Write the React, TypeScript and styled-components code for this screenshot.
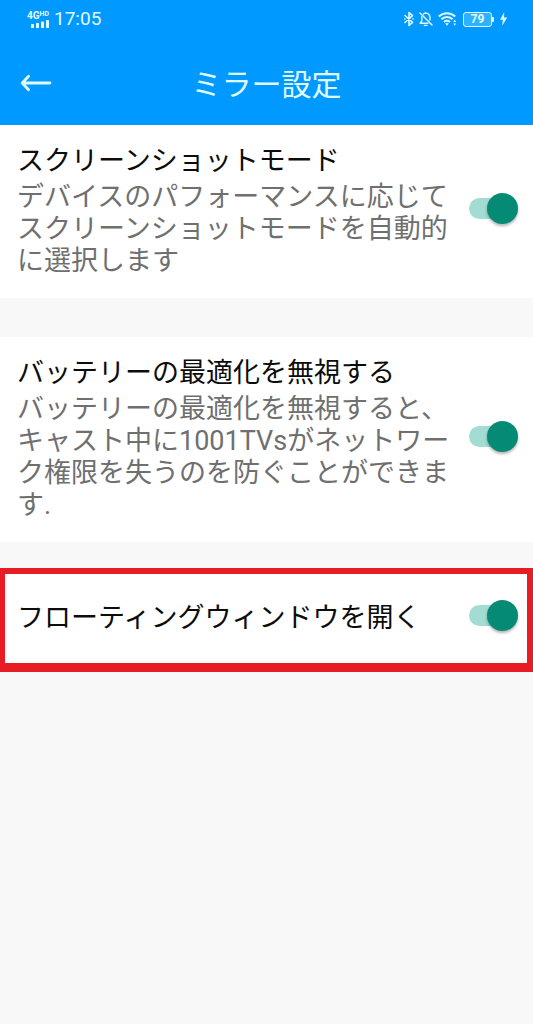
import React, { useId, useState } from "react";
import styled, { createGlobalStyle } from "styled-components";

const GlobalStyle = createGlobalStyle`
  * { box-sizing: border-box; }
  html, body { margin: 0; background: #f8f8f8; }
  body { font-family: Roboto, "Noto Sans CJK JP", sans-serif; }
`;

const Screen = styled.div`
  display: flex;
  flex-direction: column;
  min-height: 100vh;
  background: #f8f8f8;
`;

const Header = styled.header`
  background: #0099ff;
  color: #e0fbff;
`;

const StatusBar = styled.div`
  display: flex;
  align-items: center;
  justify-content: space-between;
  height: 38px;
  padding: 0 25px;
`;

const StatusGroup = styled.div`
  display: flex;
  align-items: center;
`;

const Network = styled.div`
  display: flex;
  flex-direction: column;
  align-items: flex-end;
  width: 24px;
  margin-right: 5px;
`;

const NetworkLabel = styled.div`
  display: flex;
  align-items: flex-start;
  font-size: 10px;
  line-height: 9px;
  font-weight: 700;
`;

const NetworkTag = styled.span`
  font-size: 7px;
  line-height: 6px;
`;

const Clock = styled.time`
  font-size: 19px;
  line-height: 22px;
`;

const StatusIcons = styled(StatusGroup)`
  gap: 5px;
`;

const Battery = styled.div`
  display: flex;
  align-items: center;

  &::after {
    content: "";
    width: 2px;
    height: 5px;
    background: currentColor;
    border-radius: 0 1px 1px 0;
  }
`;

const BatteryLevel = styled.span`
  display: flex;
  align-items: center;
  justify-content: center;
  width: 29px;
  height: 15px;
  border: 1px solid currentColor;
  border-radius: 3px;
  background: #2eb2ff;
  font-size: 12px;
  line-height: 13px;
  font-weight: 700;
`;

const TitleBar = styled.div`
  display: grid;
  grid-template-columns: 56px 1fr 56px;
  align-items: center;
  height: 87px;
  padding-top: 6px;
`;

const BackButton = styled.button`
  display: flex;
  align-items: center;
  height: 48px;
  padding: 0 0 4px 20px;
  border: 0;
  background: none;
  color: inherit;
  cursor: pointer;
`;

const Title = styled.h1`
  margin: 0;
  font-size: 30px;
  line-height: 40px;
  font-weight: 400;
  text-align: center;
`;

const Settings = styled.main`
  display: flex;
  flex-direction: column;
`;

const SettingRow = styled.section<{ $spaceBelow?: number; $highlighted?: boolean }>`
  display: flex;
  align-items: center;
  gap: 16px;
  margin-bottom: ${(p) => p.$spaceBelow ?? 0}px;
  padding: ${(p) => (p.$highlighted ? "26px 9px 27px 12px" : "20px 15px 21px 17px")};
  background: #ffffff;
  border: 0 solid #e81c24;
  border-width: ${(p) => (p.$highlighted ? "6px 6px 9px 5px" : "0")};
`;

const SettingText = styled.div`
  flex: 1;
  min-width: 0;
`;

const SettingLabel = styled.label`
  display: block;
  color: #0c0c0c;
  font-size: 27px;
  line-height: 32px;
`;

const SettingNote = styled.p`
  margin: 4px 0 0;
  color: #6f6f6f;
  font-size: 27px;
  line-height: 32px;
`;

const Switch = styled.input`
  appearance: none;
  flex: none;
  display: flex;
  align-items: center;
  position: relative;
  width: 49px;
  height: 31px;
  margin: 0 0 5px;
  cursor: pointer;

  &::before {
    content: "";
    width: 44px;
    height: 21px;
    border-radius: 11px;
    background: #c4c4c4;
  }

  &::after {
    content: "";
    position: absolute;
    top: 0;
    left: 0;
    width: 31px;
    height: 31px;
    border-radius: 50%;
    background: #f1f1f1;
    box-shadow: 0 2px 3px rgba(0, 0, 0, 0.3);
  }

  &:checked::before {
    background: #a3dcd3;
  }

  &:checked::after {
    left: 18px;
    background: #058a76;
  }
`;

type SettingProps = {
  label: string;
  note?: string;
  spaceBelow?: number;
  highlighted?: boolean;
};

function Setting({ label, note, spaceBelow, highlighted }: SettingProps) {
  const id = useId();
  const [on, setOn] = useState(true);
  return (
    <SettingRow $spaceBelow={spaceBelow} $highlighted={highlighted}>
      <SettingText>
        <SettingLabel htmlFor={id}>{label}</SettingLabel>
        {note && <SettingNote id={`${id}-note`}>{note}</SettingNote>}
      </SettingText>
      <Switch
        id={id}
        type="checkbox"
        role="switch"
        aria-describedby={note ? `${id}-note` : undefined}
        checked={on}
        onChange={(e) => setOn(e.target.checked)}
      />
    </SettingRow>
  );
}

const SignalIcon = () => (
  <svg width="18" height="8" viewBox="0 0 18 8" fill="currentColor" aria-hidden="true">
    <rect x="0" y="4" width="3" height="4" rx="0.5" />
    <rect x="5" y="3" width="3" height="5" rx="0.5" />
    <rect x="10" y="1.5" width="3" height="6.5" rx="0.5" />
    <rect x="15" y="0" width="3" height="8" rx="0.5" />
  </svg>
);

const BluetoothIcon = () => (
  <svg width="10" height="16" viewBox="0 0 10 16" fill="none" stroke="currentColor" strokeWidth="1.6" strokeLinejoin="round" strokeLinecap="round" aria-hidden="true">
    <path d="M1 4.5 8.5 11.3 5 14.5V1.5L8.5 4.7 1 11.5" />
    <path d="M.8 8h.2M9 8h.2" />
  </svg>
);

const BellOffIcon = () => (
  <svg width="14" height="16" viewBox="0 0 14 16" fill="none" stroke="currentColor" strokeWidth="1.4" strokeLinecap="round" strokeLinejoin="round" aria-hidden="true">
    <path d="M1 2 13 14" />
    <path d="M4.5 3A4 4 0 0 1 11 6.3V9" />
    <path d="M2.8 5.8V10L1.2 12.2H9" />
    <path d="M5.3 14.4H8" />
  </svg>
);

const WifiIcon = () => (
  <svg width="20" height="16" viewBox="0 0 20 16" fill="none" stroke="currentColor" strokeWidth="2" aria-hidden="true">
    <path d="M.8 5.4A12 12 0 0 1 17.2 5.4" />
    <path d="M3.4 8.3A8 8 0 0 1 14.6 8.3" />
    <path d="M6 11A4.4 4.4 0 0 1 12 11" />
    <path d="M7.2 12.6Q9 11.4 10.8 12.6L9 14.8Z" fill="currentColor" stroke="none" />
    <path d="M16.7 8.6 18.2 11H15.2ZM16.7 14.8 15.2 12.4H18.2Z" fill="currentColor" stroke="none" />
  </svg>
);

const BoltIcon = () => (
  <svg width="9" height="14" viewBox="0 0 9 14" fill="currentColor" aria-hidden="true">
    <path d="M5.2.3 1 7.8H3.8L3.2 13.7 8.2 5.6H5Z" />
  </svg>
);

const BackIcon = () => (
  <svg width="32" height="18" viewBox="0 0 32 18" fill="none" stroke="currentColor" strokeWidth="2.8" strokeLinecap="round" strokeLinejoin="round" aria-hidden="true">
    <path d="M30 9H2.5M8.6 2.2 2.2 9 8.6 15.8" />
  </svg>
);

export default function App() {
  return (
    <Screen>
      <GlobalStyle />
      <Header>
        <StatusBar>
          <StatusGroup>
            <Network>
              <NetworkLabel>
                4G<NetworkTag>HD</NetworkTag>
              </NetworkLabel>
              <SignalIcon />
            </Network>
            <Clock>17:05</Clock>
          </StatusGroup>
          <StatusIcons>
            <BluetoothIcon />
            <BellOffIcon />
            <WifiIcon />
            <Battery>
              <BatteryLevel>79</BatteryLevel>
            </Battery>
            <BoltIcon />
          </StatusIcons>
        </StatusBar>
        <TitleBar>
          <BackButton type="button" aria-label="戻る">
            <BackIcon />
          </BackButton>
          <Title>ミラー設定</Title>
        </TitleBar>
      </Header>
      <Settings>
        <Setting
          label="スクリーンショットモード"
          note="デバイスのパフォーマンスに応じてスクリーンショットモードを自動的に選択します"
          spaceBelow={39}
        />
        <Setting
          label="バッテリーの最適化を無視する"
          note="バッテリーの最適化を無視すると、キャスト中に1001TVsがネットワーク権限を失うのを防ぐことができます."
          spaceBelow={26}
        />
        <Setting label="フローティングウィンドウを開く" highlighted />
      </Settings>
    </Screen>
  );
}
